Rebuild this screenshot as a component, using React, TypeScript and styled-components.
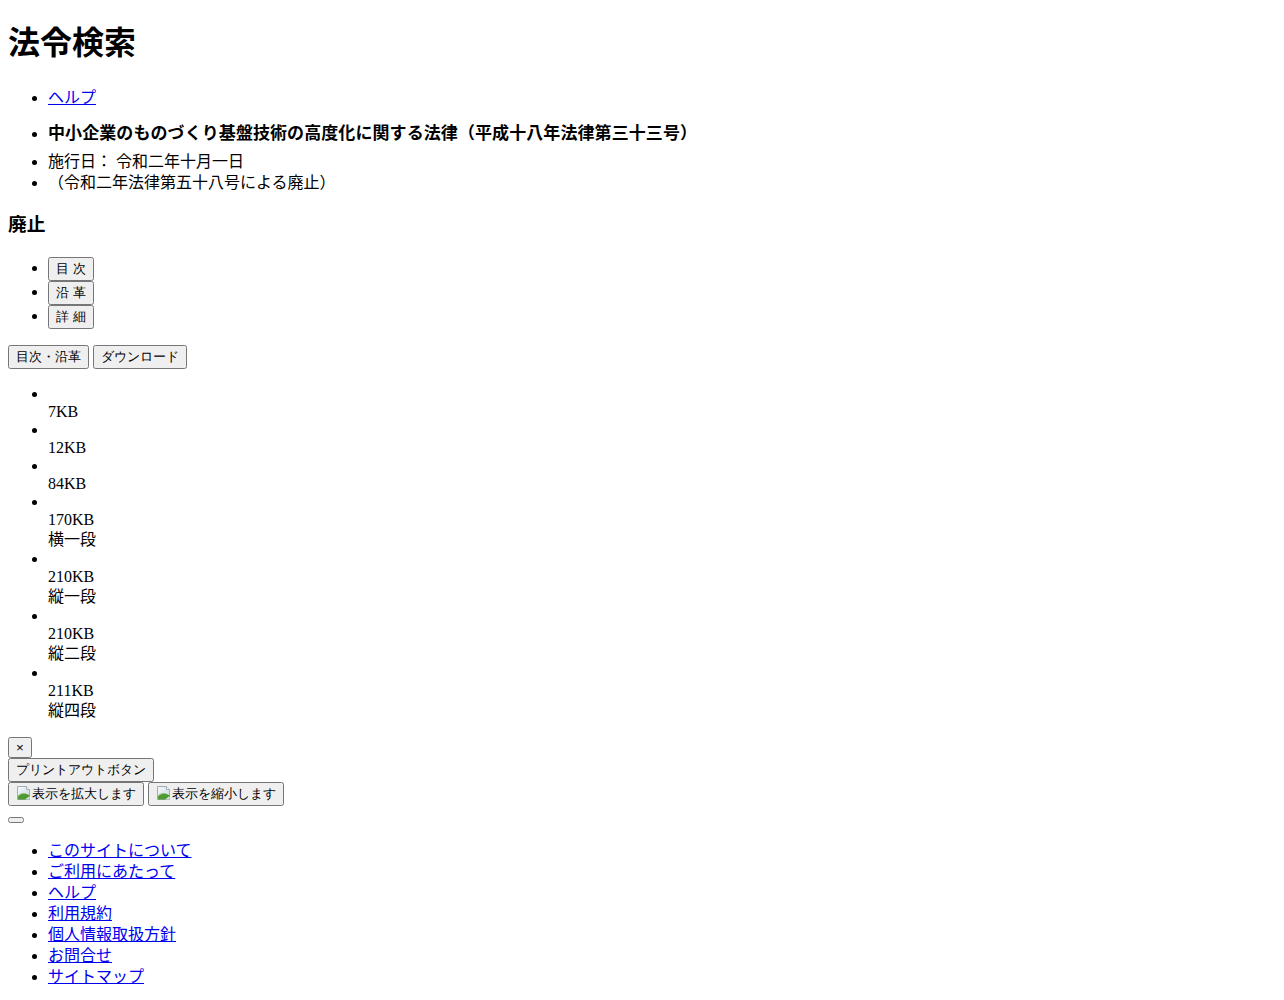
import React from "react";
import styled, { createGlobalStyle } from "styled-components";

const GlobalStyle = createGlobalStyle`
  body {
    margin: 0;
    padding: 8px;
    font-family: "Liberation Serif", "Noto Sans CJK JP", serif;
    font-size: 16px;
    color: #000;
    background: #fff;
  }
`;

const downloads = [
  { size: "7KB" },
  { size: "12KB" },
  { size: "84KB" },
  { size: "170KB", label: "横一段" },
  { size: "210KB", label: "縦一段" },
  { size: "210KB", label: "縦二段" },
  { size: "211KB", label: "縦四段" },
];

const footerLinks = [
  "このサイトについて",
  "ご利用にあたって",
  "ヘルプ",
  "利用規約",
  "個人情報取扱方針",
  "お問合せ",
  "サイトマップ",
];

// broken image placeholder, as the browser draws it
const BrokenImage = () => (
  <S.ImgIcon width="16" height="16" viewBox="0 0 16 16">
    <defs>
      <linearGradient id="sky" x1="0" y1="0" x2="1" y2="1">
        <stop offset="0" stopColor="#f7f9fb" />
        <stop offset="1" stopColor="#c9d6e2" />
      </linearGradient>
    </defs>
    <path d="M1.5 1.5h9l3 3v10h-12z" fill="url(#sky)" stroke="#a4acb4" />
    <path d="M10.5 1.5v3h3" fill="#fff" stroke="#a4acb4" />
    <path d="M2 14.5v-3.5c2.5-2.5 5-3 7.5-2.5l4 1.8v4.2z" fill="#4f9a33" />
    <path d="M2 11c2.5-2.5 5-3 7.5-2.5" fill="none" stroke="#a6d18a" />
    <path d="M9 14.5l4.5-3.2v3.2z" fill="#dfe7ee" />
  </S.ImgIcon>
);

const App = () => {
  return (
    <>
      <GlobalStyle />
      <header>
        <S.SiteTitle>法令検索</S.SiteTitle>
        <S.HelpList>
          <li>
            <S.Link href="#">ヘルプ</S.Link>
          </li>
        </S.HelpList>
      </header>

      <section>
        <S.TitleList>
          <li>
            <S.LawTitle>中小企業のものづくり基盤技術の高度化に関する法律（平成十八年法律第三十三号）</S.LawTitle>
          </li>
        </S.TitleList>
        <S.InfoList>
          <li>施行日： 令和二年十月一日</li>
          <li>（令和二年法律第五十八号による廃止）</li>
        </S.InfoList>
        <S.Status>廃止</S.Status>
      </section>

      <S.ViewList>
        <li>
          <S.Button type="button">目 次</S.Button>
        </li>
        <li>
          <S.Button type="button">沿 革</S.Button>
        </li>
        <li>
          <S.Button type="button">詳 細</S.Button>
        </li>
      </S.ViewList>

      <div>
        <S.Button type="button">目次・沿革</S.Button> <S.Button type="button">ダウンロード</S.Button>
      </div>

      <S.List>
        {downloads.map((d, i) => (
          <li key={i}>
            <S.FileIcon />
            <div>{d.size}</div>
            {d.label && <S.FileLabel>{d.label}</S.FileLabel>}
          </li>
        ))}
      </S.List>

      <div>
        <S.Button type="button">×</S.Button>
      </div>
      <div>
        <S.Button type="button">プリントアウトボタン</S.Button>
      </div>
      <div>
        <S.Button type="button">
          <BrokenImage />
          表示を拡大します
        </S.Button>{" "}
        <S.Button type="button">
          <BrokenImage />
          表示を縮小します
        </S.Button>
      </div>
      <div>
        <S.Button type="button" aria-label="ページトップ"></S.Button>
      </div>

      <S.FooterList>
        {footerLinks.map((l) => (
          <li key={l}>
            <S.Link href="#">{l}</S.Link>
          </li>
        ))}
      </S.FooterList>
    </>
  );
};

export default App;

const S = {
  SiteTitle: styled.h1`
    font-size: 32px;
    font-weight: bold;
    margin: 9.4px 0 0;
  `,
  List: styled.ul`
    margin: 16px 0;
    padding-left: 40px;
    list-style: disc;
  `,
  HelpList: styled.ul`
    margin: 21.1px 0 0;
    padding-left: 40px;
  `,
  TitleList: styled.ul`
    margin: 10.2px 0 0;
    padding-left: 40px;
  `,
  InfoList: styled.ul`
    margin: 7.5px 0 0;
    padding-left: 40px;
    line-height: 21px;
  `,
  ViewList: styled.ul`
    margin: 20.6px 0 16px;
    padding-left: 40px;
  `,
  FooterList: styled.ul`
    margin: 16px 0;
    padding-left: 40px;
    line-height: 21px;
  `,
  Link: styled.a`
    color: #0000ee;
    text-decoration: underline;
  `,
  LawTitle: styled.strong`
    display: block;
    font-size: 17px;
    font-weight: bold;
    letter-spacing: 0.08px;
  `,
  Status: styled.h3`
    font-size: 18.72px;
    font-weight: bold;
    margin: 16.2px 0 0;
  `,
  FileIcon: styled.span`
    display: inline-block;
    width: 0;
    height: 0;
  `,
  FileLabel: styled.div`
    line-height: 21px;
  `,
  ImgIcon: styled.svg`
    vertical-align: -3px;
  `,
  Button: styled.button``,
};
